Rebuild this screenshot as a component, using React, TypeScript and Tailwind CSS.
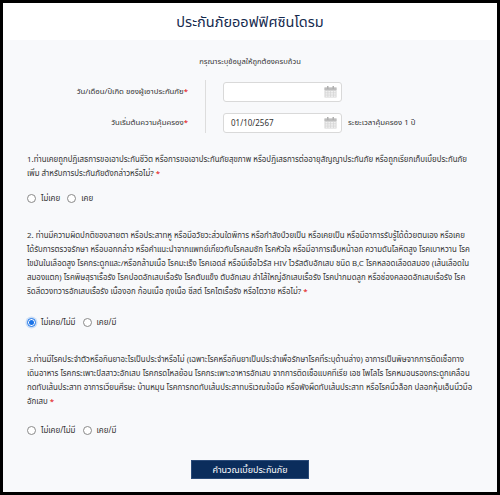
import React from "react";

const FONT = { fontFamily: '"Noto Sans", "Noto Sans Thai", "Liberation Sans", "DejaVu Sans", sans-serif' };

function CalendarIcon() {
  return (
    <svg width="13" height="12" viewBox="0 0 13 12" className="shrink-0">
      <rect x="0.5" y="1.5" width="12" height="10" fill="#d4d4d4" />
      <rect x="0.5" y="1.5" width="12" height="2.5" fill="#bdbdbd" />
      <rect x="3" y="0" width="1.5" height="3" fill="#b0b0b0" />
      <rect x="8.5" y="0" width="1.5" height="3" fill="#b0b0b0" />
      <g fill="#f0f0f0">
        <rect x="1.5" y="5" width="2" height="1.5" />
        <rect x="4.3" y="5" width="2" height="1.5" />
        <rect x="7" y="5" width="2" height="1.5" />
        <rect x="9.7" y="5" width="2" height="1.5" />
        <rect x="1.5" y="7.2" width="2" height="1.5" />
        <rect x="4.3" y="7.2" width="2" height="1.5" />
        <rect x="7" y="7.2" width="2" height="1.5" />
        <rect x="9.7" y="7.2" width="2" height="1.5" />
        <rect x="1.5" y="9.4" width="2" height="1.5" />
        <rect x="4.3" y="9.4" width="2" height="1.5" />
        <rect x="7" y="9.4" width="2" height="1.5" />
        <rect x="9.7" y="9.4" width="2" height="1.5" />
      </g>
    </svg>
  );
}

function Radio({ label, checked }: { label: string; checked?: boolean }) {
  return (
    <div className="flex items-center gap-[5px]">
      {checked ? (
        <span className="w-[9px] h-[9px] rounded-full border border-[#1a73e8] bg-white flex items-center justify-center shadow-[0_0_0_1.5px_rgba(26,115,232,0.2)]">
          <span className="w-[5px] h-[5px] rounded-full bg-[#1a73e8]" />
        </span>
      ) : (
        <span className="w-[9px] h-[9px] rounded-full border border-[#8a8a8a] bg-white" />
      )}
      <span className="text-[8px] leading-[12px] text-[#333]">{label}</span>
    </div>
  );
}

function Question({ lines, mt, radios, checkedIndex }: { lines: string[]; mt: string; radios: string[]; checkedIndex?: number }) {
  return (
    <div className="flex flex-col">
      <div className="text-[7.9px] leading-[14px] text-[#333]">
        {lines.map((l, i) => (
          <div key={i} className="whitespace-nowrap">
            {l}
            {i === lines.length - 1 && <span className="text-[#e00000]"> *</span>}
          </div>
        ))}
      </div>
      <div className={`flex items-center gap-[7px] h-[12px] ${mt}`}>
        {radios.map((r, i) => (
          <Radio key={i} label={r} checked={checkedIndex === i} />
        ))}
      </div>
    </div>
  );
}

export default function App() {
  return (
    <div style={FONT} className="w-[500px] h-[495px] border-[3px] border-black bg-[#f8f9fb] flex flex-col overflow-hidden">
      <div className="h-[37px] bg-white flex items-center justify-center shrink-0">
        <h1 className="text-[14.5px] text-[#152a4e] leading-none">ประกันภัยออฟฟิศซินโดรม</h1>
      </div>
      <div className="flex flex-col">
        <div className="mt-[14px] text-center text-[7.6px] leading-[14px] text-[#333]">กรุณาระบุข้อมูลให้ถูกต้องครบถ้วน</div>
        <div className="mt-[12px] flex h-[53px]">
          <div className="w-[185px] flex flex-col gap-[11px] pt-[2px]">
            <div className="h-[20px] flex items-center justify-end text-[7.8px] text-[#333]">
              วัน/เดือน/ปีเกิด ของผู้เอาประกันภัย<span className="text-[#e00000]">*</span>
            </div>
            <div className="h-[20px] flex items-center justify-end text-[7.8px] text-[#333]">
              วันเริ่มต้นความคุ้มครอง<span className="text-[#e00000]">*</span>
            </div>
          </div>
          <div className="ml-[17px] w-px bg-[#dddddd]" />
          <div className="ml-[17px] flex flex-col gap-[11px] pt-[2px]">
            <div className="w-[119px] h-[20px] bg-white border border-[#d9d9d9] rounded-[3px] flex items-center justify-end pr-[4px]">
              <CalendarIcon />
            </div>
            <div className="flex items-center gap-[6px]">
              <div className="w-[119px] h-[20px] bg-white border border-[#d9d9d9] rounded-[3px] flex items-center justify-between pl-[7px] pr-[4px]">
                <span className="text-[8px] text-[#333]">01/10/2567</span>
                <CalendarIcon />
              </div>
              <span className="text-[7.8px] text-[#333]">ระยะเวลาคุ้มครอง 1 ปี</span>
            </div>
          </div>
        </div>
        <div className="mt-[19px] px-[24px] flex flex-col gap-[24px]">
          <Question
            mt="mt-[12px]"
            lines={[
              "1.ท่านเคยถูกปฏิเสธการขอเอาประกันชีวิต หรือการขอเอาประกันภัยสุขภาพ หรือปฏิเสธการต่ออายุสัญญาประกันภัย หรือถูกเรียกเก็บเบี้ยประกันภัย",
              "เพิ่ม สำหรับการประกันภัยดังกล่าวหรือไม่?",
            ]}
            radios={["ไม่เคย", "เคย"]}
          />
          <Question
            mt="mt-[18px]"
            checkedIndex={0}
            lines={[
              "2. ท่านมีความผิดปกติของสายตา หรือประสาทหู หรือมีอวัยวะส่วนใดพิการ หรือกำลังป่วยเป็น หรือเคยเป็น หรือมีอาการรับรู้ได้ด้วยตนเอง หรือเคย",
              "ได้รับการตรวจรักษา หรือบอกกล่าว หรือคำแนะนำจากแพทย์เกี่ยวกับโรคลมชัก โรคหัวใจ หรือมีอาการเจ็บหน้าอก ความดันโลหิตสูง โรคเบาหวาน โรค",
              "ไขมันในเลือดสูง โรคกระดูกและ/หรือกล้ามเนื้อ โรคมะเร็ง โรคเอดส์ หรือมีเชื้อไวรัส HIV ไวรัสตับอักเสบ ชนิด B,C โรคหลอดเลือดสมอง (เส้นเลือดใน",
              "สมองแตก) โรคพิษสุราเรื้อรัง โรคปอดอักเสบเรื้อรัง โรคตับแข็ง ตับอักเสบ ลำไส้ใหญ่อักเสบเรื้อรัง โรคปากมดลูก หรือช่องคลอดอักเสบเรื้อรัง โรค",
              "ริดสีดวงทวารอักเสบเรื้อรัง เนื้องอก ก้อนเนื้อ ถุงเนื้อ ซีสต์ โรคไตเรื้อรัง หรือไตวาย หรือไม่?",
            ]}
            radios={["ไม่เคย/ไม่มี", "เคย/มี"]}
          />
          <Question
            mt="mt-[16px]"
            lines={[
              "3.ท่านมีโรคประจำตัวหรือกินยาอะไรเป็นประจำหรือไม่ (เฉพาะโรคหรือกินยาเป็นประจำเพื่อรักษาโรคที่ระบุด้านล่าง) อาการเป็นพิษจากการติดเชื้อทาง",
              "เดินอาหาร โรคกระเพาะปัสสาวะอักเสบ โรคกรดไหลย้อน โรคกระเพาะอาหารอักเสบ จากการติดเชื้อแบคทีเรีย เอช ไพโลไร โรคหมอนรองกระดูกเคลื่อน",
              "กดทับเส้นประสาท อาการเวียนศีรษะ บ้านหมุน โรคการกดทับเส้นประสาทบริเวณข้อมือ หรือพังผืดทับเส้นประสาท หรือโรคนิ้วล็อก ปลอกหุ้มเอ็นนิ้วมือ",
              "อักเสบ",
            ]}
            radios={["ไม่เคย/ไม่มี", "เคย/มี"]}
          />
          <div className="flex justify-center">
            <button className="w-[118px] h-[19px] bg-[#0b2d5c] border border-[#2a4a78] text-white text-[9px] flex items-center justify-center">
              คำนวณเบี้ยประกันภัย
            </button>
          </div>
        </div>
      </div>
    </div>
  );
}
